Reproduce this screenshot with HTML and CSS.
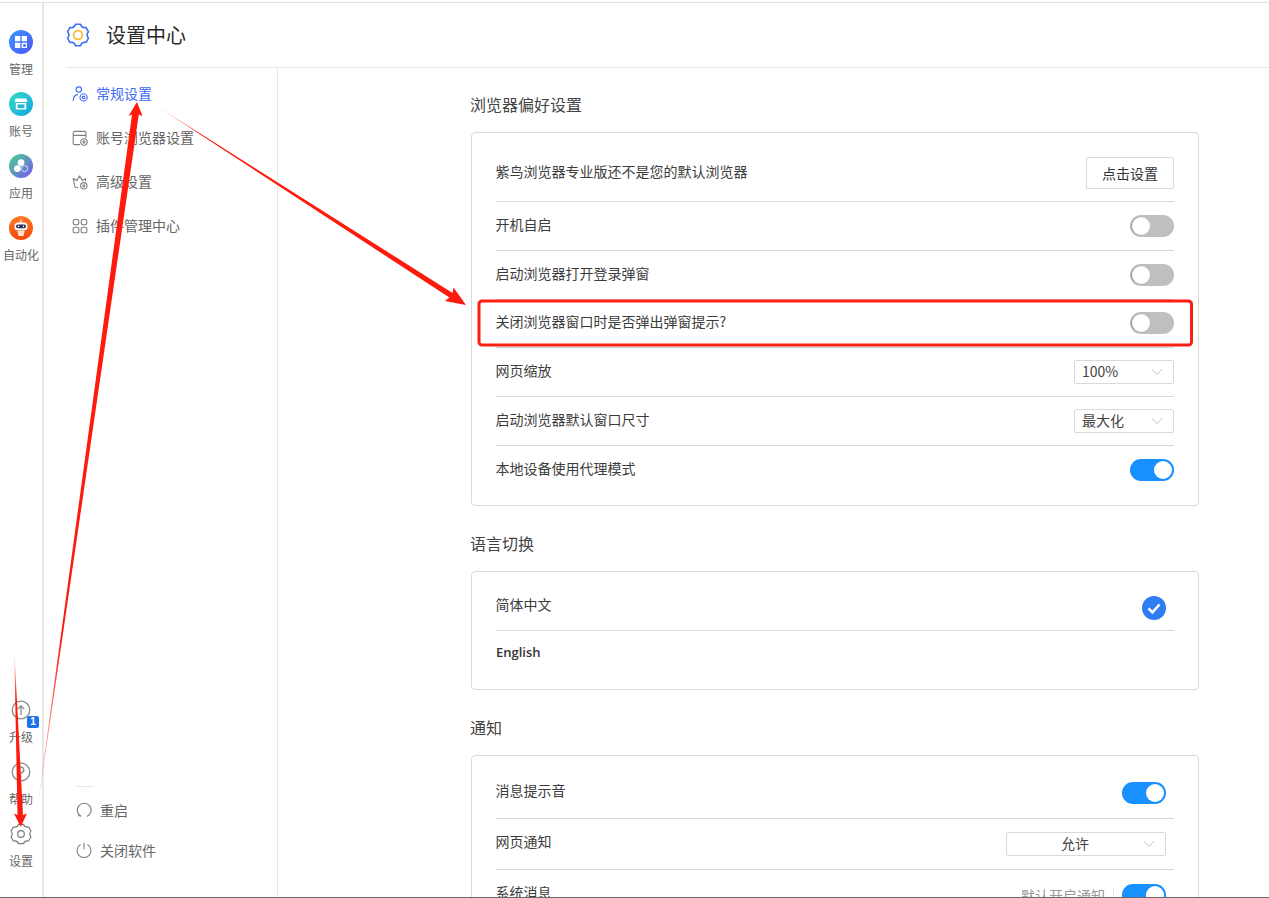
FILE: index.html
```html
<!DOCTYPE html>
<html lang="zh-CN">
<head>
<meta charset="utf-8">
<title>设置中心</title>
<link rel="stylesheet" href="styles.css">
</head>
<body>
<div class="app">
  <nav class="rail">
    <div class="rail-group">
      <div class="rail-item">
        <svg class="rail-icon" viewBox="0 0 24 24"><defs><linearGradient id="g1" x1="0" y1="0" x2="1" y2="1"><stop offset="0" stop-color="#3d97ff"/><stop offset="1" stop-color="#4a55f5"/></linearGradient></defs><circle cx="12" cy="12" r="12" fill="url(#g1)"/><path fill="#fff" d="M6 6h5.3v5.3H6zM12.7 6H18v5.3h-5.3zM6 12.7h5.3V18H6zM12.7 12.7H18V18h-5.3z"/><rect x="14.2" y="14.2" width="2.6" height="2.6" fill="#3d6cf5"/></svg>
        <span class="rail-label">管理</span>
      </div>
      <div class="rail-item">
        <svg class="rail-icon" viewBox="0 0 24 24"><defs><linearGradient id="g2" x1="0" y1="0" x2="1" y2="1"><stop offset="0" stop-color="#35dcc0"/><stop offset="1" stop-color="#10a5e6"/></linearGradient></defs><circle cx="12" cy="12" r="12" fill="url(#g2)"/><path fill="#fff" d="M6.5 6.5h11l1 3.5h-13zM6.8 11h10.4v6.6H6.8z"/><rect x="8.6" y="12.4" width="6.8" height="3.8" fill="#1fb9d6"/></svg>
        <span class="rail-label">账号</span>
      </div>
      <div class="rail-item">
        <svg class="rail-icon" viewBox="0 0 24 24"><defs><linearGradient id="g3" x1="0" y1="0" x2="1" y2="1"><stop offset="0" stop-color="#45d68a"/><stop offset="1" stop-color="#7a52f4"/></linearGradient></defs><circle cx="12" cy="12" r="12" fill="url(#g3)"/><circle cx="12" cy="8.6" r="3.4" fill="#fff"/><circle cx="8.4" cy="14.6" r="3.4" fill="#fff"/><circle cx="15.6" cy="14.6" r="3.1" fill="none" stroke="#dfe3ff" stroke-width=".9"/></svg>
        <span class="rail-label">应用</span>
      </div>
      <div class="rail-item">
        <svg class="rail-icon" viewBox="0 0 24 24"><defs><linearGradient id="g4" x1="0" y1="0" x2="0" y2="1"><stop offset="0" stop-color="#ff7a25"/><stop offset="1" stop-color="#f4470c"/></linearGradient></defs><circle cx="12" cy="12" r="12" fill="url(#g4)"/><rect x="11.3" y="3.5" width="1.4" height="3" fill="#ffd9c2"/><rect x="5.5" y="6.5" width="13" height="8" rx="3.5" fill="#fff"/><rect x="7" y="8.6" width="10" height="3.6" rx="1.8" fill="#27305a"/><circle cx="9.6" cy="10.4" r=".8" fill="#fff"/><circle cx="14.4" cy="10.4" r=".8" fill="#fff"/><path fill="#ffe3d2" d="M8.5 15h7l-1 5h-5z"/></svg>
        <span class="rail-label">自动化</span>
      </div>
    </div>
    <div class="rail-group">
      <div class="rail-item">
        <svg class="rail-icon" viewBox="0 0 24 24" fill="none" stroke="#8a8a8a" stroke-width="1.3"><circle cx="12" cy="12" r="8.8"/><path d="M12 17V7.8M8.8 11 12 7.8l3.2 3.2"/></svg>
        <span class="badge">1</span>
        <span class="rail-label">升级</span>
      </div>
      <div class="rail-item">
        <svg class="rail-icon" viewBox="0 0 24 24" fill="none" stroke="#8a8a8a" stroke-width="1.3"><circle cx="12" cy="12" r="8.8"/><path d="M9.4 9.8a2.7 2.7 0 1 1 3.8 2.5c-.8.4-1.2.9-1.2 1.8"/><path d="M12 15.6v1.2"/></svg>
        <span class="rail-label">帮助</span>
      </div>
      <div class="rail-item">
        <svg class="rail-icon" viewBox="0 0 24 24" fill="none" stroke="#7d7d7d" stroke-width="1.2" stroke-linejoin="round"><path d="M9.53 2.28H14.47Q15.8 5.9 19.6 5L22 9Q19.6 12 22 15L19.6 19Q15.8 18.1 14.47 21.72H9.53Q8.2 18.1 4.4 19L2 15Q4.4 12 2 9L4.4 5Q8.2 5.9 9.53 2.28Z"/><circle cx="12" cy="12" r="3.3"/></svg>
        <span class="rail-label">设置</span>
      </div>
    </div>
  </nav>

  <div class="workspace">
    <header class="header">
      <svg class="header-icon" viewBox="0 0 24 24" fill="none" stroke-linejoin="round"><path stroke="#3a6ff0" stroke-width="1.5" d="M9.53 1.28H14.47Q15.8 5.42 20.04 4.5L22.52 8.78Q19.6 12 22.52 15.22L20.04 19.5Q15.8 18.58 14.47 22.72H9.53Q8.2 18.58 3.96 19.5L1.48 15.22Q4.4 12 1.48 8.78L3.96 4.5Q8.2 5.42 9.53 1.28Z"/><circle cx="12" cy="12" r="4.4" stroke="#fdb92c" stroke-width="1.7"/></svg>
      <h1 class="header-title">设置中心</h1>
    </header>

    <div class="columns">
      <aside class="sidebar">
        <ul class="menu">
          <li class="menu-item active">
            <svg class="menu-icon" viewBox="0 0 16 16" fill="none" stroke="#3f6cf5" stroke-width="1.1"><circle cx="6.8" cy="3.6" r="2.7"/><path d="M1.2 15c0-3.8 1.8-6 4.6-6.6"/><circle cx="11.6" cy="11.4" r="3.6"/><circle cx="11.6" cy="11.4" r="1.3"/></svg>
            <span class="menu-text">常规设置</span>
          </li>
          <li class="menu-item">
            <svg class="menu-icon" viewBox="0 0 16 16" fill="none" stroke="#7a8088" stroke-width="1.1"><path d="M8 14.6H2.6a1.4 1.4 0 0 1-1.4-1.4V2.8a1.4 1.4 0 0 1 1.4-1.4h10a1.4 1.4 0 0 1 1.4 1.4V8M1.2 5.4H14"/><circle cx="12" cy="12" r="3.2"/><circle cx="12" cy="12" r="1.1"/></svg>
            <span class="menu-text">账号浏览器设置</span>
          </li>
          <li class="menu-item">
            <svg class="menu-icon" viewBox="0 0 16 16" fill="none" stroke="#7a8088" stroke-width="1.1" stroke-linejoin="round"><path d="M6.5 14 3 13 1.2 4.6 4.8 6.6 7.6 2l2.8 4.4 3.4-1.8-.4 2.4"/><circle cx="11.8" cy="11.8" r="3.2"/><circle cx="11.8" cy="11.8" r="1.1"/></svg>
            <span class="menu-text">高级设置</span>
          </li>
          <li class="menu-item">
            <svg class="menu-icon" viewBox="0 0 16 16" fill="none" stroke="#7a8088" stroke-width="1.1"><rect x="1.2" y="1.2" width="5.6" height="5.6" rx="2.4"/><rect x="9.2" y="1.2" width="5.6" height="5.6" rx="2.4"/><rect x="1.2" y="9.2" width="5.6" height="5.6" rx="1.4"/><rect x="9.2" y="9.2" width="5.6" height="5.6" rx="1.4"/></svg>
            <span class="menu-text">插件管理中心</span>
          </li>
        </ul>
        <div class="side-foot">
          <div class="foot-rule"></div>
          <div class="foot-item">
            <svg class="foot-icon" viewBox="0 0 16 16" fill="none" stroke="#7d7d7d" stroke-width="1.1"><path d="M5.4 14.4a6.9 6.9 0 1 1 5.6 0"/><path d="M2.2 12 3 14.4"/></svg>
            <span>重启</span>
          </div>
          <div class="foot-item">
            <svg class="foot-icon" viewBox="0 0 16 16" fill="none" stroke="#7d7d7d" stroke-width="1.1"><path d="M4.6 2.6a6.9 6.9 0 1 0 6.8 0"/><path d="M8 .8v6.4"/></svg>
            <span>关闭软件</span>
          </div>
        </div>
      </aside>

      <main class="content">
        <section class="section">
          <h2 class="section-title">浏览器偏好设置</h2>
          <div class="card">
            <div class="row row-first"><span class="row-text">紫鸟浏览器专业版还不是您的默认浏览器</span><button class="btn">点击设置</button></div>
            <div class="row"><span class="row-text">开机自启</span><span class="toggle"></span></div>
            <div class="row"><span class="row-text">启动浏览器打开登录弹窗</span><span class="toggle"></span></div>
            <div class="row"><span class="row-text">关闭浏览器窗口时是否弹出弹窗提示?</span><span class="toggle"></span></div>
            <div class="row"><span class="row-text">网页缩放</span>
              <span class="select"><span class="select-text">100%</span><svg class="chevron" viewBox="0 0 12 8" fill="none" stroke="#c4c4c4"><path d="M1 1.2 6 6.6l5-5.4"/></svg></span></div>
            <div class="row"><span class="row-text">启动浏览器默认窗口尺寸</span>
              <span class="select"><span class="select-text">最大化</span><svg class="chevron" viewBox="0 0 12 8" fill="none" stroke="#c4c4c4"><path d="M1 1.2 6 6.6l5-5.4"/></svg></span></div>
            <div class="row row-last"><span class="row-text">本地设备使用代理模式</span><span class="toggle on"></span></div>
          </div>
        </section>

        <section class="section">
          <h2 class="section-title">语言切换</h2>
          <div class="card card-lang">
            <div class="lang-row"><span class="lang-text">简体中文</span>
              <svg class="check" viewBox="0 0 24 24"><circle cx="12" cy="12" r="12" fill="#2f7df4"/><path d="M6.5 12.4 10.4 16.4 17.6 8.4" fill="none" stroke="#fff" stroke-width="2.4"/></svg></div>
            <div class="lang-row row-last"><span class="lang-en">English</span></div>
          </div>
        </section>

        <section class="section">
          <h2 class="section-title">通知</h2>
          <div class="card card-notify">
            <div class="row notify-row"><span class="notify-text">消息提示音</span><span class="toggle on"></span></div>
            <div class="row notify-row"><span class="notify-text">网页通知</span>
              <span class="select select-wide"><span class="select-text">允许</span><svg class="chevron" viewBox="0 0 12 8" fill="none" stroke="#c4c4c4"><path d="M1 1.2 6 6.6l5-5.4"/></svg></span></div>
            <div class="row notify-row"><span class="notify-text">系统消息</span>
              <span class="inline-group"><span class="hint">默认开启通知</span><span class="toggle on"></span></span></div>
          </div>
        </section>
      </main>
    </div>
  </div>
</div>

<svg class="markup" viewBox="0 0 1269 898">
  <defs>
    <linearGradient id="fade1" gradientUnits="userSpaceOnUse" x1="34" y1="832" x2="62" y2="640"><stop offset="0" stop-color="#ff1a0e" stop-opacity="0"/><stop offset="1" stop-color="#ff1a0e"/></linearGradient>
    <linearGradient id="fade2" gradientUnits="userSpaceOnUse" x1="152" y1="103" x2="200" y2="134"><stop offset="0" stop-color="#ff1a0e" stop-opacity="0"/><stop offset="1" stop-color="#ff1a0e"/></linearGradient>
    <linearGradient id="fade3" gradientUnits="userSpaceOnUse" x1="14" y1="648" x2="16" y2="700"><stop offset="0" stop-color="#ff1a0e" stop-opacity="0"/><stop offset="1" stop-color="#ff1a0e"/></linearGradient>
  </defs>
  <polygon fill="url(#fade1)" points="137,102 142.5,116 138.8,114.5 34,832 132,114.5 128.5,116"/>
  <polygon fill="url(#fade2)" points="466,305 453.5,287.5 452.6,293 152,103 449.4,297.6 444.9,300.9"/>
  <polygon fill="url(#fade3)" points="20.7,827 27,813.5 23,815 14.2,648 17.5,815 14,813.5"/>
  <rect x="479" y="301" width="712.5" height="44" rx="3" fill="none" stroke="#fb1f14" stroke-width="3"/>
</svg>
</body>
</html>
```
FILE: styles.css
```css
* { box-sizing: border-box; }
html, body { margin: 0; padding: 0; height: 100%; overflow: hidden; background: #fff; }
body {
  position: relative;
  font-family: "Noto Sans CJK SC", "Liberation Sans", sans-serif;
  font-size: 14px;
  color: #3c3c3c;
}
.app {
  display: flex;
  height: 896px;
  margin-top: 2px;
  border-top: 1px solid #e2e2e2;
  border-bottom: 1px solid #6a6a6a;
  overflow: visible;
}
.rail {
  flex: 0 0 44px;
  display: flex;
  flex-direction: column;
  justify-content: space-between;
  border-right: 2px solid #e6e6e6;
  padding: 27px 0 0;
}
.rail-group { display: flex; flex-direction: column; }
.rail-group:last-child { padding-bottom: 13px; }
.rail-item {
  position: relative;
  display: flex;
  flex-direction: column;
  align-items: center;
  height: 62px;
}
.rail-icon { width: 24px; height: 24px; display: block; flex: none; }
.rail-label { margin-top: 5px; font-size: 12px; line-height: 20px; color: #666; white-space: nowrap; }
.badge {
  position: absolute;
  left: 27px;
  top: 18px;
  width: 12px;
  height: 12px;
  border-radius: 2px;
  background: #1a73e8;
  color: #fff;
  font: bold 10px/12px "Liberation Sans", sans-serif;
  text-align: center;
}
.workspace { flex: 1; display: flex; flex-direction: column; min-width: 0; overflow: hidden; }
.header {
  flex: 0 0 65px;
  margin-left: 22px;
  display: flex;
  align-items: center;
  gap: 16px;
  border-bottom: 1px solid #e8e8e8;
}
.header-icon { width: 24px; height: 24px; margin-bottom: 1px; }
.header-title { margin: 0; font-size: 20px; font-weight: 400; line-height: 28px; color: #2b2b2b; }
.columns { flex: 1; display: flex; min-height: 0; }
.sidebar {
  flex: 0 0 234px;
  display: flex;
  flex-direction: column;
  justify-content: space-between;
  border-right: 1px solid #e8e8e8;
}
.menu { list-style: none; margin: 0; padding: 4px 0 0; }
.menu-item {
  display: flex;
  align-items: center;
  gap: 8px;
  height: 44px;
  padding-left: 28px;
  color: #666;
}
.menu-item.active { color: #3f6cf5; }
.menu-text { margin-bottom: 2px; }
.menu-icon { width: 16px; height: 16px; flex: none; }
.side-foot { padding: 0 0 27px 32px; }
.foot-rule { width: 18px; height: 1px; background: #e8e8e8; margin-bottom: 3px; }
.foot-item { display: flex; align-items: center; gap: 8px; height: 40px; color: #666; }
.foot-icon { width: 16px; height: 16px; flex: none; }
.content { flex: 1; padding: 24px 0 0 193px; overflow: hidden; min-width: 0; }
.section { width: 728px; margin-bottom: 26px; }
.section-title { margin: 0 0 16px -1px; font-size: 16px; font-weight: 400; line-height: 24px; color: #444; }
.section + .section .section-title { margin-bottom: 16px; }
.section + .section { margin-top: -1px; }
.card { border: 1px solid #d9d9d9; border-radius: 4px; padding: 12px 24px 11px; background: #fff; }
.row {
  display: flex;
  align-items: center;
  justify-content: space-between;
  padding: 11.9px 0;
  border-bottom: 1px solid #d9d9d9;
  line-height: 24px;
}
.row-text { line-height: 21px; margin: 0 0 3px -0.5px; }
.row-first { padding: 12px 0; }
.row-last { border-bottom: 0; }
.btn {
  width: 88px;
  height: 32px;
  padding: 0 0 1px;
  border: 1px solid #d9d9d9;
  border-radius: 2px;
  background: #fff;
  font: inherit;
  color: #333;
}
.toggle {
  position: relative;
  display: block;
  width: 44px;
  height: 22px;
  border-radius: 11px;
  background: #bfbfbf;
  flex: none;
}
.toggle::after {
  content: "";
  position: absolute;
  left: 2px;
  top: 2px;
  width: 18px;
  height: 18px;
  border-radius: 50%;
  background: #fff;
  box-shadow: -1px 0 1px rgba(0, 0, 0, .22);
}
.toggle.on { background: #1890ff; }
.toggle.on::after { left: 24px; box-shadow: none; }
.select {
  display: flex;
  align-items: center;
  width: 100px;
  height: 24px;
  padding: 0 10px 0 7px;
  border: 1px solid #d9d9d9;
  border-radius: 2px;
  color: #444;
  flex: none;
}
.select-text { flex: 1; line-height: 20px; margin-bottom: 2px; }
.chevron { width: 12px; height: 8px; flex: none; }
.select-wide { width: 160px; margin-right: 8px; padding-left: 0; text-align: center; }
.card-lang { padding-bottom: 15px; }
.lang-row {
  display: flex;
  align-items: flex-start;
  justify-content: space-between;
  padding: 9px 0 10px;
  line-height: 24px;
  border-bottom: 1px solid #d9d9d9;
}
.lang-row.row-last { border-bottom: 0; }
.lang-text { line-height: 22px; margin-left: -0.5px; }
.check { width: 24px; height: 24px; margin: 3px 8px 0 0; flex: none; }
.lang-en { font-weight: 600; font-family: "Open Sans", "Noto Sans CJK SC", sans-serif; font-size: 13px; color: #333; }
.card-notify { padding-bottom: 20px; }
.notify-row { padding: 13px 0; }
.notify-text { line-height: 19px; margin: 0 0 5px -0.5px; }
.notify-row > .toggle { margin-right: 8px; }
.inline-group { display: flex; align-items: center; margin-right: 8px; }
.hint { color: #999; padding-right: 8px; margin-right: 8px; border-right: 1px solid #e8e8e8; line-height: 16px; }
.markup { position: absolute; left: 0; top: 0; width: 1269px; height: 898px; pointer-events: none; }
```
